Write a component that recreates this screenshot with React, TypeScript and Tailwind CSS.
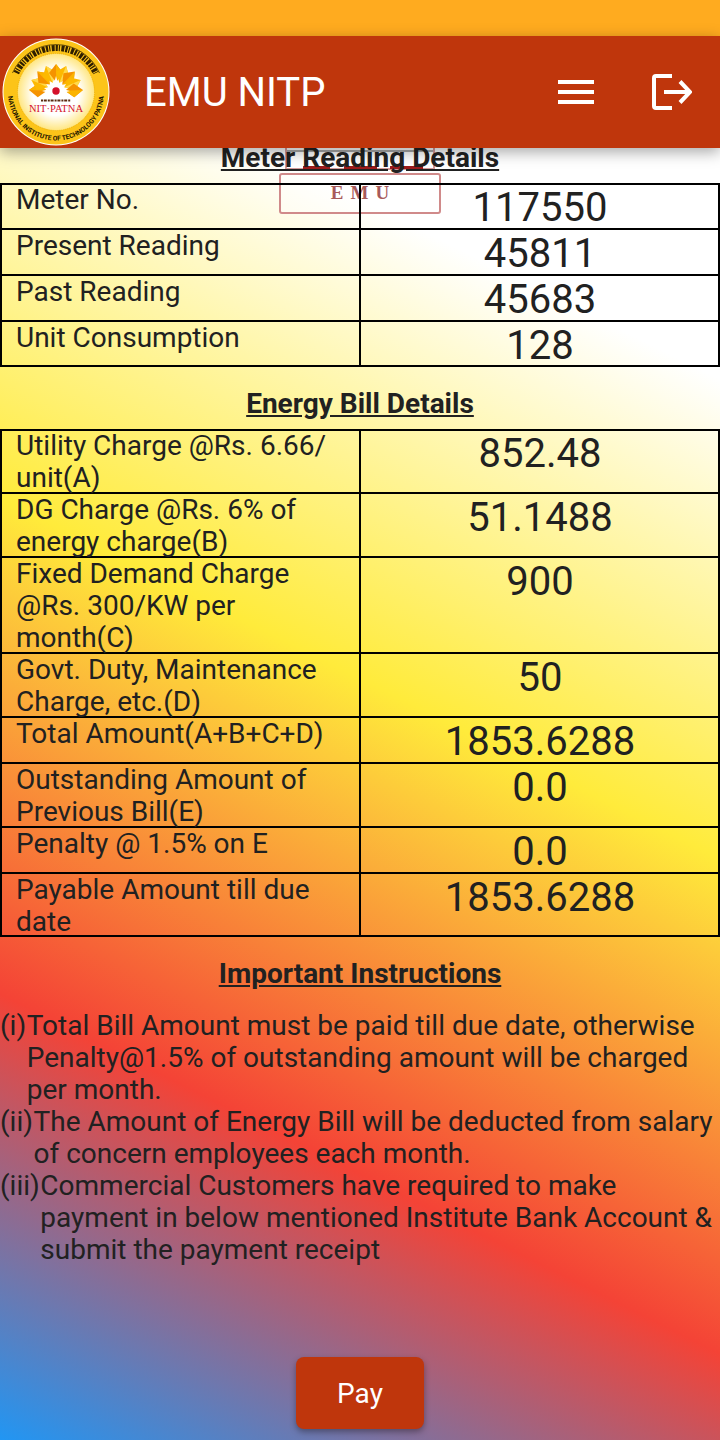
const meter = [
  ["Meter No.", "117550"],
  ["Present Reading", "45811"],
  ["Past Reading", "45683"],
  ["Unit Consumption", "128"],
];

const bill = [
  ["Utility Charge @Rs. 6.66/ unit(A)", "852.48"],
  ["DG Charge @Rs. 6% of energy charge(B)", "51.1488"],
  ["Fixed Demand Charge @Rs. 300/KW per month(C)", "900"],
  ["Govt. Duty, Maintenance Charge, etc.(D)", "50"],
  ["Total Amount(A+B+C+D)", "1853.6288"],
  ["Outstanding Amount of Previous Bill(E)", "0.0"],
  ["Penalty @ 1.5% on E", "0.0"],
  ["Payable Amount till due date", "1853.6288"],
];

const notes = [
  ["(i)", "Total Bill Amount must be paid till due date, otherwise Penalty@1.5% of outstanding amount will be charged per month."],
  ["(ii)", "The Amount of Energy Bill will be deducted from salary of concern employees each month."],
  ["(iii)", "Commercial Customers have required to make payment in below mentioned Institute Bank Account & submit the payment receipt"],
];

const Logo = () => {
  const petals = [-88, -66, -44, -22, 0, 22, 44, 66, 88];
  return (
    <svg viewBox="0 0 108 108" className="w-[108px] h-[108px]">
      <defs>
        <radialGradient id="core">
          <stop offset="0.6" stopColor="#ffffff" />
          <stop offset="1" stopColor="#ffe680" />
        </radialGradient>
        <path id="bottomArc" d="M 6.6 47 A 48 48 0 1 0 101.4 47" fill="none" />
      </defs>
      <circle cx="54" cy="54" r="53.5" fill="#fff" />
      <circle cx="54" cy="54" r="52.5" fill="#fcc419" />
      <circle cx="54" cy="54" r="38.5" fill="url(#core)" stroke="#e8a900" strokeWidth="0.7" strokeDasharray="1 1" />
      <path d="M 14.3 35 A 44 44 0 0 1 93.7 35" fill="none" stroke="#2e1f00" strokeWidth="6" strokeDasharray="2.2 1 1.2 1.4 3 1" />
      <path d="M 10.5 35 A 47.5 47.5 0 0 1 97.5 35" fill="none" stroke="#2e1f00" strokeWidth="0.7" />
      <text fontFamily="Roboto, sans-serif" fontSize="6.6" fontWeight="700" fill="#1c1400">
        <textPath href="#bottomArc" startOffset="50%" textAnchor="middle">NATIONAL INSTITUTE OF TECHNOLOGY PATNA</textPath>
      </text>
      {petals.map((a, i) => (
        <g key={a} transform={`rotate(${a} 54 53)`}>
          <polygon points="54,44 47,35 54,26 61,35" fill={i % 2 ? "#fdb900" : "#f59300"} />
          <polygon points="54,44 54,26 61,35" fill={i % 2 ? "#ffd94a" : "#fbb400"} />
        </g>
      ))}
      <polygon points="54,38 57,50 68,53 57,56 54,62 51,56 40,53 51,50" fill="#fff" />
      <circle cx="54" cy="53" r="3.7" fill="#d4112a" />
      <path d="M39 62.5 H69" stroke="#5a2a10" strokeWidth="2.2" strokeDasharray="2 0.8 3 1" />
      <text x="54" y="74" textAnchor="middle" fontFamily="'Liberation Serif', serif" fontSize="11" textLength="54" lengthAdjust="spacingAndGlyphs" fill="#d4112a">NIT·PATNA</text>
    </svg>
  );
};

const Table = ({ rows }: { rows: string[][] }) => (
  <section className="relative shadow-[inset_0_0_0_2px_#000]">
    {rows.map(([label, value], i) => (
      <div key={label} className={`grid grid-cols-2 ${i > 0 ? "shadow-[0_-1px_0_#000,inset_0_1px_0_#000]" : ""}`}>
        <div className="px-4 text-[28px] leading-[32px] shadow-[1px_0_0_#000,inset_-1px_0_0_#000]">
          <div className="translate-y-px">{label}</div>
        </div>
        <div className="pt-1 text-center text-[40px] leading-[42px]">{value}</div>
      </div>
    ))}
  </section>
);

const Stamp = () => (
  <>
    <div className="absolute left-[285px] top-0 w-[150px] h-[22px] bg-white/40 border-x-2 border-b-2 border-[#d39a9a]">
      <div className="mt-[2px] h-[2px] bg-[#a9a9a9]" />
      <div className="absolute left-[16px] right-[10px] bottom-[-1px] flex justify-between">
        <span className="w-[27px] h-[3px] bg-[#9c1c1c]" />
        <span className="w-[33px] h-[3px] bg-[#9c1c1c]" />
        <span className="w-[33px] h-[3px] bg-[#9c1c1c]" />
      </div>
    </div>
    <div className="absolute left-[279px] top-[25px] w-[162px] h-[41px] bg-white/30 border-2 border-[#d08a8a] rounded-[3px] flex justify-center pt-[6px] text-[19px] leading-[24px] font-bold tracking-[7px] pl-[7px] text-[#a85a5a] font-['Liberation_Serif',serif]">
      EMU
    </div>
  </>
);

export default function App() {
  return (
    <div className="relative w-[720px] h-[1440px] overflow-hidden flex flex-col font-['Roboto',sans-serif] text-[#212121]">
      <div className="h-9 bg-[#ffab1f]" />
      <header className="relative z-10 h-[112px] bg-[#bf360c] flex items-center shadow-[0_4px_14px_rgba(0,0,0,0.35)]">
        <div className="ml-[2px]"><Logo /></div>
        <h1 className="ml-[34px] mt-[2px] text-[40px] text-white">EMU NITP</h1>
        <div className="ml-auto mr-[126px] w-9 flex flex-col gap-[6px]">
          <span className="h-1 bg-white" />
          <span className="h-1 bg-white" />
          <span className="h-1 bg-white" />
        </div>
        <svg viewBox="0 0 40 36" className="absolute left-[652px] top-[38px] w-10 h-9" fill="none" stroke="#fff" strokeWidth="4">
          <path d="M20 2 H4 a2 2 0 0 0 -2 2 V32 a2 2 0 0 0 2 2 H20" />
          <path d="M12 18 H37 M28 7.5 L38 18 L28 28.5" />
        </svg>
      </header>
      <main className="relative flex-1 flex flex-col bg-[linear-gradient(26.57deg,#2196f3_0%,#f44336_27%,#ffeb3b_57%,#ffffff_86%)]">
        <Stamp />
        <h2 className="relative -mt-[6px] text-center text-[28px] leading-[32px] font-bold underline">Meter Reading Details</h2>
        <div className="mt-[9px]"><Table rows={meter} /></div>
        <h2 className="relative mt-[21px] text-center text-[28px] leading-[32px] font-bold underline">Energy Bill Details</h2>
        <div className="mt-[9px]"><Table rows={bill} /></div>
        <h2 className="relative mt-[21px] text-center text-[28px] leading-[32px] font-bold underline">Important Instructions</h2>
        <div className="relative mt-[20px] text-[28px] leading-[32px]">
          {notes.map(([n, t]) => (
            <div key={n} className="flex">
              <span className="shrink-0 pr-[0.6px]">{n}</span>
              <span>{t}</span>
            </div>
          ))}
        </div>
        <button className="absolute left-[296px] top-[1209px] w-[128px] h-[72px] rounded-[8px] bg-[#bf360c] pt-px text-white text-[28px] shadow-[0_3px_6px_rgba(0,0,0,0.35)]">Pay</button>
      </main>
    </div>
  );
}
